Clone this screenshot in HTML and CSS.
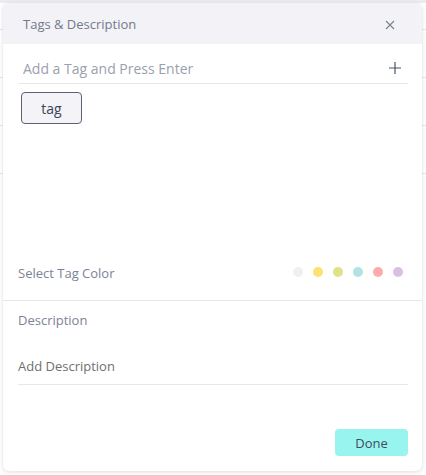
FILE: index.html
```html
<!DOCTYPE html>
<html lang="en">
<head>
    <meta charset="UTF-8">
    <meta name="viewport" content="width=device-width, initial-scale=1.0">
    <title>Tags &amp; Description</title>
    <link rel="stylesheet" href="styles.css">
</head>
<body>
    <div class="modal">
        <div class="modal-header">
            <span class="modal-title">Tags &amp; Description</span>
            <button class="close-btn" aria-label="Close">
                <svg width="10" height="10" viewBox="0 0 10 10">
                    <path d="M1 1L9 9M9 1L1 9" stroke="#7a8090" stroke-width="1.1" fill="none"/>
                </svg>
            </button>
        </div>

        <div class="tag-section">
            <div class="tag-input">
                <input type="text" placeholder="Add a Tag and Press Enter">
                <svg class="plus" width="12" height="12" viewBox="0 0 12 12">
                    <path d="M6 0V12M0 6H12" stroke="#4a5266" stroke-width="1.2" fill="none"/>
                </svg>
            </div>
            <div class="tag-list">
                <span class="tag">tag</span>
            </div>
            <div class="color-row">
                <span class="label">Select Tag Color</span>
                <div class="swatches">
                    <span class="dot grey"></span>
                    <span class="dot yellow"></span>
                    <span class="dot lime"></span>
                    <span class="dot teal"></span>
                    <span class="dot pink"></span>
                    <span class="dot purple"></span>
                </div>
            </div>
        </div>

        <div class="desc-section">
            <div class="label">Description</div>
            <input class="desc-input" type="text" placeholder="Add Description">
        </div>

        <div class="modal-footer">
            <button class="done-btn">Done</button>
        </div>
    </div>
</body>
</html>
```

FILE: styles.css
```css
body {
    font-family: "Open Sans", "Noto Sans", sans-serif;
    margin: 0;
    padding: 3px 4px 4px 3px;
    background-color: #ffffff;
    background-image: linear-gradient(#ececf0 0 3px, transparent 3px),
        repeating-linear-gradient(to bottom, transparent 0 29px, #e6e6ea 29px 30px, transparent 30px 48px);
    background-size: 100% 200px;
    background-repeat: no-repeat;
}
.modal {
    height: 468px;
    background-color: #ffffff;
    border-radius: 6px;
    box-shadow: 0 1px 4px rgba(60, 64, 80, 0.18);
    display: flex;
    flex-direction: column;
    overflow: hidden;
}
.modal-header {
    height: 41px;
    flex-shrink: 0;
    background-color: #f2f2f7;
    display: flex;
    align-items: center;
    justify-content: space-between;
    padding: 0 27px 0 20px;
}
.modal-title {
    font-size: 13px;
    color: #737a8c;
}
.close-btn {
    border: none;
    background: none;
    padding: 0;
    width: 10px;
    height: 10px;
    display: flex;
    cursor: pointer;
    margin-top: 2px;
}
.tag-section {
    padding: 0 14px 0 15px;
    border-bottom: 1px solid #e6e7ee;
}
.tag-input {
    display: flex;
    align-items: center;
    height: 38px;
    padding-top: 1px;
    border-bottom: 1px solid #e8e9ee;
}
.tag-input input {
    flex: 1;
    border: none;
    outline: none;
    padding: 9px 0 0 5px;
    font-family: inherit;
    font-size: 14px;
    color: #3c4456;
    background: none;
}
.tag-input input::placeholder {
    color: #9ba0ad;
}
.plus {
    margin: 8px 7px 0 0;
}
.tag-list {
    height: 166px;
    padding-top: 8px;
}
.tag {
    display: inline-flex;
    align-items: center;
    justify-content: center;
    box-sizing: border-box;
    width: 61px;
    height: 32px;
    margin-left: 3px;
    border: 1px solid #5c6373;
    border-radius: 4px;
    background-color: #f3f3f8;
    font-size: 14px;
    color: #3c4456;
}
.color-row {
    display: flex;
    align-items: center;
    justify-content: space-between;
    height: 30px;
    margin-bottom: 12px;
}
.label {
    font-size: 13px;
    color: #7c8296;
}
.swatches {
    display: flex;
    gap: 10px;
    margin-right: 5px;
    margin-top: -2px;
}
.dot {
    width: 10px;
    height: 10px;
    border-radius: 50%;
}
.dot.grey { background-color: #efeff4; }
.dot.yellow { background-color: #fbe271; }
.dot.lime { background-color: #dde488; }
.dot.teal { background-color: #b2e2e2; }
.dot.pink { background-color: #ffabab; }
.dot.purple { background-color: #dabfe1; }
.desc-section {
    padding: 9px 14px 0 15px;
    display: flex;
    flex-direction: column;
}
.desc-section .label {
    line-height: 20px;
}
.desc-input {
    margin-top: 26px;
    border: none;
    border-bottom: 1px solid #e6e7ee;
    outline: none;
    padding: 0 0 8px 0;
    height: 20px;
    font-family: inherit;
    font-size: 13px;
    color: #3c4456;
}
.desc-input::placeholder {
    color: #707070;
}
.modal-footer {
    display: flex;
    justify-content: flex-end;
    padding: 44px 14px 0 0;
}
.done-btn {
    width: 73px;
    height: 27px;
    border: none;
    border-radius: 4px;
    background-color: #97f4ef;
    font-family: inherit;
    font-size: 13px;
    color: #3f4b5e;
    cursor: pointer;
}
```
